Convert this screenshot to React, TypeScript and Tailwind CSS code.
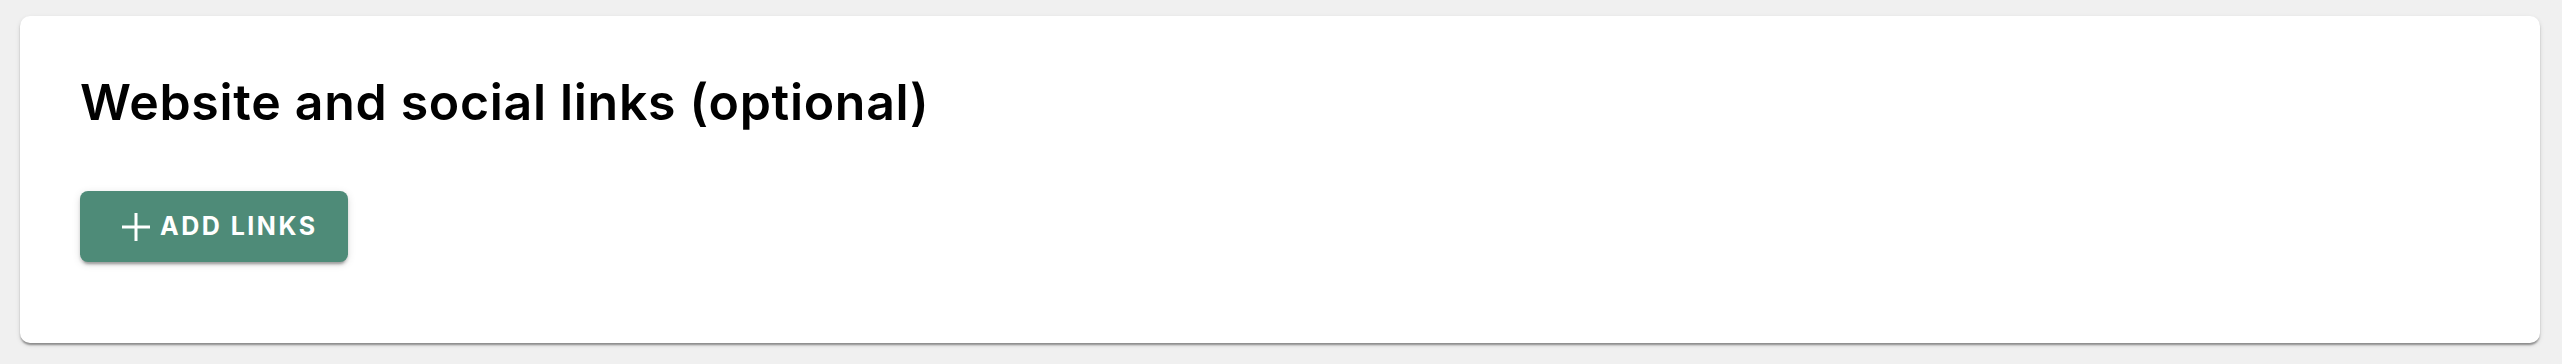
import React from 'react';

function PlusIcon() {
  return (
    <svg width="28" height="28" viewBox="0 0 28 28" fill="none" aria-hidden="true">
      <path d="M0 14h28M14 0v28" stroke="currentColor" strokeWidth="3" />
    </svg>
  );
}

export default function App() {
  return (
    <div
      className="min-h-[364px] bg-[#f0f0f0] pt-[16px] pl-[20px] pr-[22px]"
      style={{ fontFamily: 'Inter, "Noto Sans", sans-serif' }}
    >
      {/* Links card */}
      <div className="h-[327px] bg-white rounded-[10px] px-[60px] pt-[56px] shadow-[0_3px_2px_-1px_rgba(0,0,0,0.25),0_2px_2px_0_rgba(0,0,0,0.14),0_2px_5px_0_rgba(0,0,0,0.12)]">
        <h2 className="text-[50px] leading-[60px] font-semibold text-black tracking-[0.7px]">
          Website and social links (optional)
        </h2>
        <button className="mt-[59px] flex items-center gap-[10px] h-[71px] w-[268px] pl-[42px] rounded-[8px] bg-[#4e8b78] text-white shadow-[0_5px_2px_-3px_rgba(0,0,0,0.2),0_3px_3px_0_rgba(0,0,0,0.14),0_2px_8px_0_rgba(0,0,0,0.12)]">
          <PlusIcon />
          <span className="text-[25px] font-bold uppercase tracking-[2.5px]">Add links</span>
        </button>
      </div>
    </div>
  );
}
